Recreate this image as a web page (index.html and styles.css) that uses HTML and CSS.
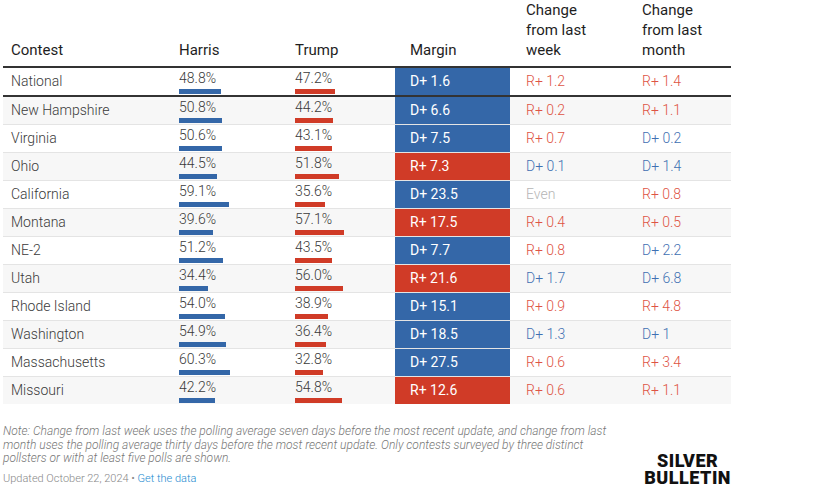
FILE: index.html
```html
<!DOCTYPE html>
<html lang="en">
<head>
<meta charset="utf-8">
<title>Polling averages</title>
<link rel="stylesheet" href="styles.css">
</head>
<body>
<div class="wrap">
  <div class="table">
    <div class="row head">
      <div class="cell">Contest</div>
      <div class="cell">Harris</div>
      <div class="cell">Trump</div>
      <div class="cell margin-col">Margin</div>
      <div class="cell chg">Change<br>from last<br>week</div>
      <div class="cell chg">Change<br>from last<br>month</div>
    </div>

    <div class="row nat">
      <div class="cell name">National</div>
      <div class="cell pct"><span>48.8%</span><i class="bar d" style="width:41.5px"></i></div>
      <div class="cell pct"><span>47.2%</span><i class="bar r" style="width:40.1px"></i></div>
      <div class="cell mg dm">D+ 1.6</div>
      <div class="cell chg rt">R+ 1.2</div>
      <div class="cell chg rt">R+ 1.4</div>
    </div>

    <div class="row alt">
      <div class="cell name">New Hampshire</div>
      <div class="cell pct"><span>50.8%</span><i class="bar d" style="width:43.2px"></i></div>
      <div class="cell pct"><span>44.2%</span><i class="bar r" style="width:37.6px"></i></div>
      <div class="cell mg dm">D+ 6.6</div>
      <div class="cell chg rt">R+ 0.2</div>
      <div class="cell chg rt">R+ 1.1</div>
    </div>

    <div class="row">
      <div class="cell name">Virginia</div>
      <div class="cell pct"><span>50.6%</span><i class="bar d" style="width:43.0px"></i></div>
      <div class="cell pct"><span>43.1%</span><i class="bar r" style="width:36.6px"></i></div>
      <div class="cell mg dm">D+ 7.5</div>
      <div class="cell chg rt">R+ 0.7</div>
      <div class="cell chg dt">D+ 0.2</div>
    </div>

    <div class="row alt">
      <div class="cell name">Ohio</div>
      <div class="cell pct"><span>44.5%</span><i class="bar d" style="width:37.8px"></i></div>
      <div class="cell pct"><span>51.8%</span><i class="bar r" style="width:44.0px"></i></div>
      <div class="cell mg rm">R+ 7.3</div>
      <div class="cell chg dt">D+ 0.1</div>
      <div class="cell chg dt">D+ 1.4</div>
    </div>

    <div class="row">
      <div class="cell name">California</div>
      <div class="cell pct"><span>59.1%</span><i class="bar d" style="width:50.2px"></i></div>
      <div class="cell pct"><span>35.6%</span><i class="bar r" style="width:30.3px"></i></div>
      <div class="cell mg dm">D+ 23.5</div>
      <div class="cell chg even">Even</div>
      <div class="cell chg rt">R+ 0.8</div>
    </div>

    <div class="row alt">
      <div class="cell name">Montana</div>
      <div class="cell pct"><span>39.6%</span><i class="bar d" style="width:33.7px"></i></div>
      <div class="cell pct"><span>57.1%</span><i class="bar r" style="width:48.5px"></i></div>
      <div class="cell mg rm">R+ 17.5</div>
      <div class="cell chg rt">R+ 0.4</div>
      <div class="cell chg rt">R+ 0.5</div>
    </div>

    <div class="row">
      <div class="cell name">NE-2</div>
      <div class="cell pct"><span>51.2%</span><i class="bar d" style="width:43.5px"></i></div>
      <div class="cell pct"><span>43.5%</span><i class="bar r" style="width:37.0px"></i></div>
      <div class="cell mg dm">D+ 7.7</div>
      <div class="cell chg rt">R+ 0.8</div>
      <div class="cell chg dt">D+ 2.2</div>
    </div>

    <div class="row alt">
      <div class="cell name">Utah</div>
      <div class="cell pct"><span>34.4%</span><i class="bar d" style="width:29.2px"></i></div>
      <div class="cell pct"><span>56.0%</span><i class="bar r" style="width:47.6px"></i></div>
      <div class="cell mg rm">R+ 21.6</div>
      <div class="cell chg dt">D+ 1.7</div>
      <div class="cell chg dt">D+ 6.8</div>
    </div>

    <div class="row">
      <div class="cell name">Rhode Island</div>
      <div class="cell pct"><span>54.0%</span><i class="bar d" style="width:45.9px"></i></div>
      <div class="cell pct"><span>38.9%</span><i class="bar r" style="width:33.1px"></i></div>
      <div class="cell mg dm">D+ 15.1</div>
      <div class="cell chg rt">R+ 0.9</div>
      <div class="cell chg rt">R+ 4.8</div>
    </div>

    <div class="row alt">
      <div class="cell name">Washington</div>
      <div class="cell pct"><span>54.9%</span><i class="bar d" style="width:46.7px"></i></div>
      <div class="cell pct"><span>36.4%</span><i class="bar r" style="width:30.9px"></i></div>
      <div class="cell mg dm">D+ 18.5</div>
      <div class="cell chg dt">D+ 1.3</div>
      <div class="cell chg dt">D+ 1</div>
    </div>

    <div class="row">
      <div class="cell name">Massachusetts</div>
      <div class="cell pct"><span>60.3%</span><i class="bar d" style="width:51.3px"></i></div>
      <div class="cell pct"><span>32.8%</span><i class="bar r" style="width:27.9px"></i></div>
      <div class="cell mg dm">D+ 27.5</div>
      <div class="cell chg rt">R+ 0.6</div>
      <div class="cell chg rt">R+ 3.4</div>
    </div>

    <div class="row alt last">
      <div class="cell name">Missouri</div>
      <div class="cell pct"><span>42.2%</span><i class="bar d" style="width:35.9px"></i></div>
      <div class="cell pct"><span>54.8%</span><i class="bar r" style="width:46.6px"></i></div>
      <div class="cell mg rm">R+ 12.6</div>
      <div class="cell chg rt">R+ 0.6</div>
      <div class="cell chg rt">R+ 1.1</div>
    </div>
  </div>

  <div class="footer">
    <div class="notes">
      <p class="note">Note: Change from last week uses the polling average seven days before the most recent update, and change from last month uses the polling average thirty days before the most recent update. Only contests surveyed by three distinct pollsters or with at least five polls are shown.</p>
      <p class="updated">Updated October 22, 2024 • <a class="link" href="#">Get the data</a></p>
    </div>
    <div class="logo"><span class="logo-line">SILVER</span><span class="logo-line">BULLETIN</span></div>
  </div>
</div>
</body>
</html>
```

FILE: styles.css
```css
html, body {
  margin: 0;
  padding: 0;
  background: #fff;
}
body {
  font-family: Roboto, "Liberation Sans", Arial, sans-serif;
  color: #3a3a3a;
}
.wrap {
  width: 728px;
  padding-left: 3px;
}
.table {
  display: flex;
  flex-direction: column;
}
.row {
  display: grid;
  grid-template-columns: 168px 116px 108px 115px 116px 105px;
  height: 28px;
  box-sizing: border-box;
  border-bottom: 1px solid #e4e4e4;
  font-size: 14px;
  font-weight: 300;
}
.row.alt {
  background: #f7f7f7;
}
.row.last {
  border-bottom: none;
  height: 27px;
}
.row.head {
  height: 68px;
  border-bottom: 2px solid #333;
  font-size: 15px;
  font-weight: 400;
  color: #1e1e1e;
  line-height: 20px;
  align-items: end;
}
.row.head .cell {
  padding-bottom: 6px;
}
.row.nat {
  height: 29px;
  border-bottom: 2px solid #333;
}
.cell {
  padding-left: 8px;
  box-sizing: border-box;
}
.name {
  line-height: 27px;
}
.pct {
  display: flex;
  flex-direction: column;
  align-items: flex-start;
  padding-top: 2px;
}
.pct span {
  line-height: 16px;
}
.bar {
  display: block;
  height: 5px;
  margin-top: 3px;
}
.bar.d {
  background: #3467a8;
}
.bar.r {
  background: #d03b27;
}
.margin-col {
  padding-left: 15px;
}
.mg {
  padding-left: 15px;
  line-height: 27px;
  color: #fff;
  font-weight: 400;
}
.mg.dm {
  background: #3467a8;
}
.mg.rm {
  background: #d03b27;
}
.chg {
  padding-left: 16px;
}
.row:not(.head) .chg {
  line-height: 27px;
}
.rt {
  color: #de5444;
}
.dt {
  color: #3f70b2;
}
.even {
  color: #b5b5b5;
}
.footer {
  display: flex;
  justify-content: space-between;
  align-items: flex-end;
  margin-top: 21px;
}
.notes {
  width: 620px;
}
.note {
  margin: 0;
  font-size: 12px;
  line-height: 13.5px;
  font-style: italic;
  font-weight: 300;
  color: #777;
}
.updated {
  margin: 6.5px 0 0;
  font-size: 11px;
  line-height: 14px;
  font-weight: 300;
  color: #888;
}
.link {
  color: #1a8ad0;
  text-decoration: none;
}
.logo {
  display: flex;
  flex-direction: column;
  align-items: center;
  font-weight: 900;
  font-size: 18px;
  letter-spacing: 0.5px;
  color: #111;
  margin-bottom: 0;
}
.logo-line {
  display: block;
  height: 17px;
  line-height: 17px;
}
```
